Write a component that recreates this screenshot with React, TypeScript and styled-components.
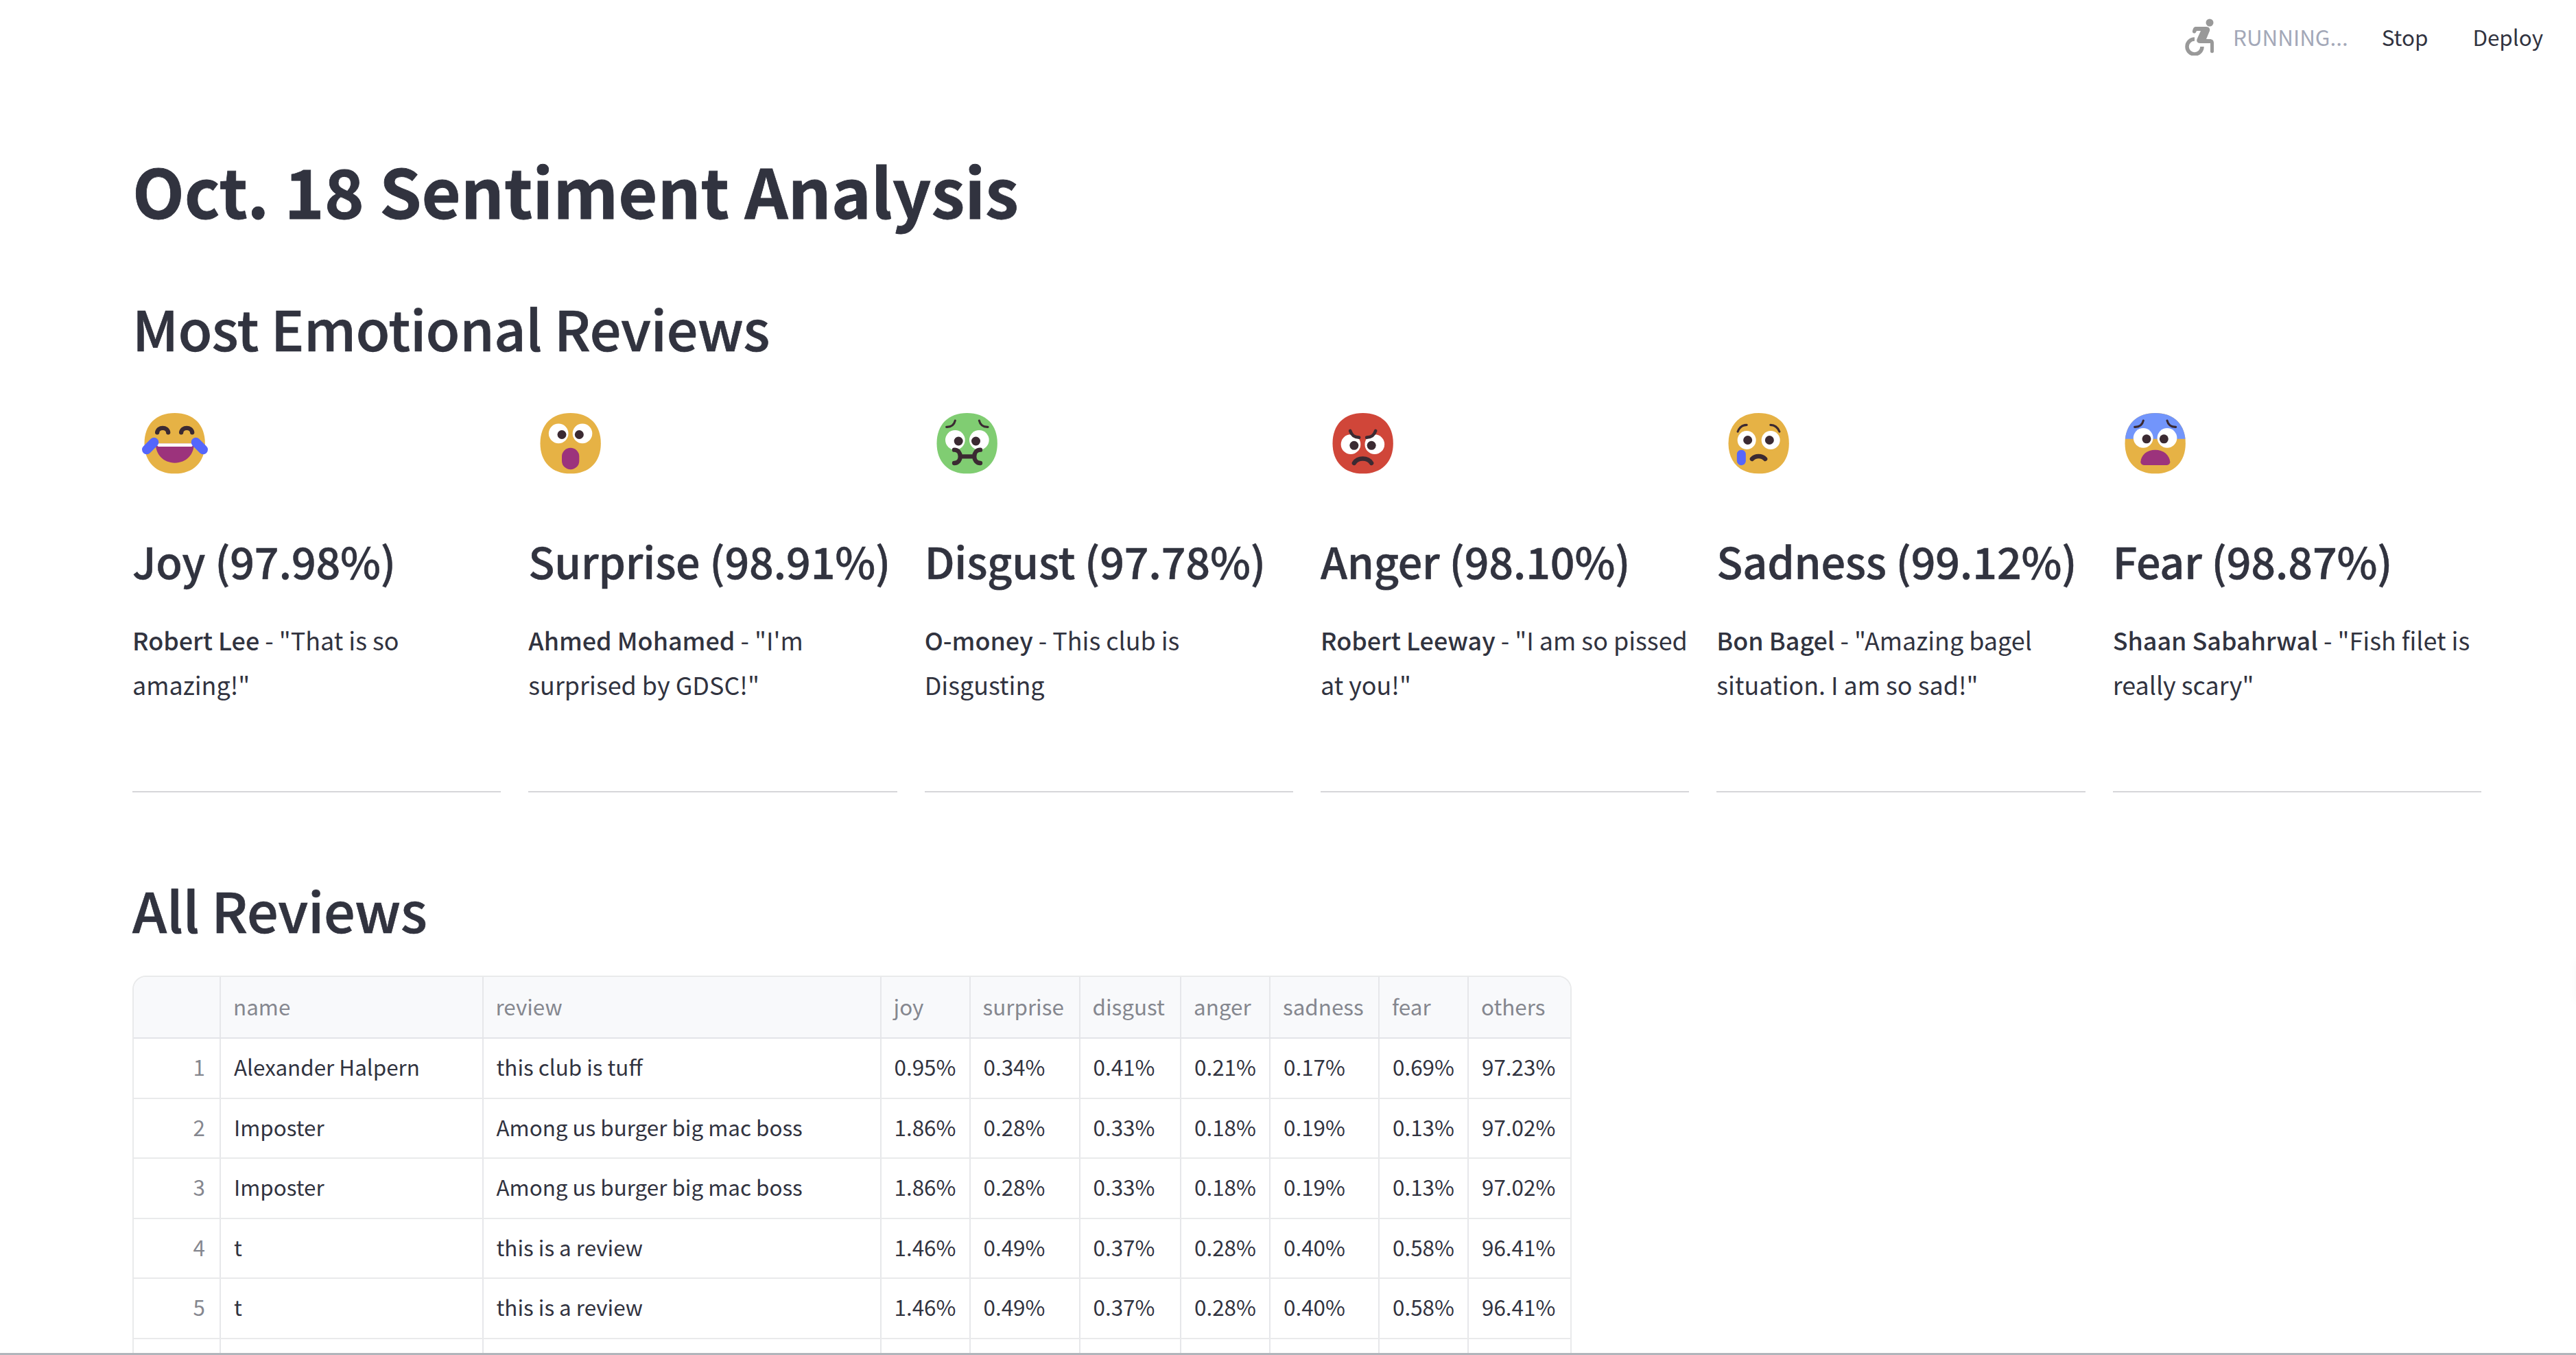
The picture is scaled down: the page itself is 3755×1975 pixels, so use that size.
import React from "react";
import styled, { createGlobalStyle } from "styled-components";

const Global = createGlobalStyle`
  * { box-sizing: border-box; }
  body { margin: 0; background: #fff; color: #31333f; }
  body, table { font-family: "Noto Sans CJK SC", "Noto Sans", sans-serif; }
`;

const Page = styled.div`
  position: relative;
  display: flex;
  flex-direction: column;
  width: 3755px;
  height: 1975px;
  overflow: hidden;
`;

const Toolbar = styled.header`
  display: flex;
  justify-content: flex-end;
  align-items: center;
  height: 108px;
  padding-right: 48px;
  font-size: 31.4px;
  line-height: 56px;
  flex: none;
`;

const Status = styled.div`
  display: flex;
  align-items: center;
  gap: 26px;
  color: #a3a8b8;
  margin-right: 49px;
`;

const ToolButton = styled.button`
  border: 0;
  padding: 0;
  background: none;
  font: inherit;
  color: #31333f;
  & + & { margin-left: 65px; }
`;

const Main = styled.main`
  flex: 1;
  min-height: 0;
  overflow: hidden;
  padding: 102px 138px 0 193px;
`;

const Title = styled.h1`
  margin: 0;
  font-size: 98.6px;
  line-height: 132px;
  font-weight: 700;
  letter-spacing: -0.06px;
  -webkit-text-stroke: 0.8px #31333f;
`;

const Heading = styled.h2<{ $top: number }>`
  margin: ${(p) => p.$top}px 0 0;
  font-size: 80.7px;
  line-height: 108px;
  font-weight: 500;
  letter-spacing: -0.3px;
  -webkit-text-stroke: 0.7px #31333f;
`;

const Columns = styled.section`
  display: grid;
  grid-template-columns: repeat(6, 1fr);
  column-gap: 40px;
  margin-top: 59px;
`;

const Column = styled.article`
  display: flex;
  flex-direction: column;
  min-width: 0;
`;

const Face = styled.svg`
  display: block;
  width: 120px;
  height: 120px;
`;

const Score = styled.h3`
  margin: 65px 0 0;
  font-size: 62.8px;
  line-height: 84px;
  font-weight: 500;
  letter-spacing: -0.22px;
  -webkit-text-stroke: 0.5px #31333f;
  white-space: nowrap;
`;

const Quote = styled.p`
  margin: 41px 0 0;
  font-size: 35.9px;
  line-height: 64.5px;
  strong { font-weight: 500; }
`;

const Rule = styled.hr`
  width: 100%;
  height: 2px;
  border: 0;
  margin: 124px 0 0;
  background: #d6d6d9;
`;

const Frame = styled.div`
  width: 2098px;
  margin-top: 43px;
  border: 2px solid #e9eaeb;
  border-radius: 20px;
  overflow: hidden;
`;

const Row = styled.div<{ $head?: boolean }>`
  display: grid;
  grid-template-columns: 127px 382.5px 580px 130px 160px 147.5px 130px 159px 130px 1fr;
  height: ${(p) => (p.$head ? 90 : 87.5)}px;
  background: ${(p) => (p.$head ? "#f8f9fb" : "#fff")};
  border-bottom: 2px solid ${(p) => (p.$head ? "#e3e4e8" : "#e9eaeb")};
`;

const Cell = styled.div<{ $muted?: boolean; $right?: boolean; $head?: boolean }>`
  display: flex;
  align-items: center;
  justify-content: ${(p) => (p.$right ? "flex-end" : "flex-start")};
  padding: 0 21px ${(p) => (p.$head ? 2 : 3)}px ${(p) => (p.$head ? 18 : 19)}px;
  font-size: 31.4px;
  line-height: 48px;
  white-space: nowrap;
  color: ${(p) => (p.$muted ? "#85878f" : "#31333f")};
  border-right: 2px solid #e6e7ea;
  &:last-child { border-right: 0; }
`;

const BottomEdge = styled.footer`
  flex: none;
  height: 3px;
  background: #b1b5bb;
`;

const EdgeShadow = styled.div`
  position: absolute;
  top: 1400px;
  right: -6px;
  width: 6px;
  height: 60px;
  box-shadow: 0 0 14px rgba(49, 51, 63, 0.05);
`;

const INK = "#3b2a32";
const AMBER = "#e6b245";
const PLUM = "#9c337c";
const BLUE = "#5566fb";

/* Rounded head shared by every emotion, centred on (cx, 228.5). */
const head = (cx: number) => {
  const r = 132.5, k = 82, y = 228.5;
  return `M${cx - r} ${y}C${cx - r} ${y - k} ${cx - k} ${y - r} ${cx} ${y - r}S${cx + r} ${y - k} ${cx + r} ${y}S${cx + k} ${y + r} ${cx} ${y + r}S${cx - r} ${y + k} ${cx - r} ${y}Z`;
};

const Emoji = ({ cx, fill, children }: { cx: number; fill: string; children: React.ReactNode }) => (
  <Face viewBox="0 0 360 360">
    <g transform={`translate(${185 - cx} -60)`} fill="none" strokeLinecap="round">
      <path d={head(cx)} fill={fill} />
      {children}
    </g>
  </Face>
);

const Eyes = ({ l, r, y, pl, pr, py, size = 43 }: Record<"l" | "r" | "y" | "pl" | "pr" | "py", number> & { size?: number }) => (
  <>
    <circle cx={l} cy={y} r={size} fill="#fff" />
    <circle cx={r} cy={y} r={size} fill="#fff" />
    <circle cx={pl} cy={py} r="19.5" fill={INK} />
    <circle cx={pr} cy={py} r="19.5" fill={INK} />
  </>
);

const JoyFace = () => (
  <Emoji cx={224.5} fill={AMBER}>
    <path d="M148 181C150 155 194 155 196 181M253 181C255 155 299 155 301 181" stroke={INK} strokeWidth="19" />
    <path d="M141 229H309C309 278 275 314 225 314S141 278 141 229Z" fill={PLUM} />
    <path d="M146 229H304V233Q304 243 294 243H158Q148 243 146 233Z" fill="#fff" />
    <path d="M134 224L102 256M317 224L349 256" stroke={BLUE} strokeWidth="41" />
  </Emoji>
);

const SurpriseFace = () => (
  <Emoji cx={217} fill={AMBER}>
    <Eyes l={164.5} r={269} y={185.5} pl={179} pr={255} py={190.5} />
    <rect x="179" y="248" width="76" height="95" rx="38" fill={PLUM} />
  </Emoji>
);

const DisgustFace = () => (
  <Emoji cx={239} fill="#80cd72">
    <Eyes l={187} r={292} y={214} pl={201.5} pr={277.5} py={219} />
    <path d="M149 157Q180 158 187 129M330 157Q299 158 292 129" stroke={INK} strokeWidth="9.5" />
    <path d="M183 257C218 257 218 315 183 315M297 257C262 257 262 315 297 315M210 286H270" stroke={INK} strokeWidth="19" />
  </Emoji>
);

const AngerFace = () => (
  <Emoji cx={229.5} fill="#d04639">
    <Eyes l={176.5} r={281} y={233} pl={191} pr={267} py={238} />
    <path d="M174 174C181 195 192 202 213 203M285 174C278 195 267 202 246 203" stroke={INK} strokeWidth="14" />
    <path d="M191 315C207 289 251 289 267 315" stroke={INK} strokeWidth="19" />
  </Emoji>
);

const SadnessFace = () => (
  <Emoji cx={221.5} fill={AMBER}>
    <Eyes l={169} r={274} y={214.5} pl={173.5} pr={268.5} py={214.5} size={40.5} />
    <path d="M130 177Q142 148 169 148M312 177Q300 148 273 148" stroke={INK} strokeWidth="9.5" />
    <path d="M192 297C207 281 235 281 250 297" stroke={INK} strokeWidth="19" />
    <path d="M145.500 276.500V305" stroke={BLUE} strokeWidth="39" />
  </Emoji>
);

const FearFace = () => (
  <Emoji cx={244} fill={AMBER}>
    <clipPath id="brow"><rect x="100" y="90" width="290" height="119.5" /></clipPath>
    <path d={head(244)} fill="#7295fb" clipPath="url(#brow)" />
    <Eyes l={191.5} r={296} y={205} pl={206} pr={282} py={209.5} />
    <path d="M154 157Q185 158 192 129M334 157Q303 158 296 129" stroke={INK} strokeWidth="9.5" />
    <path d="M180 310C182 278 209 257 244 257S306 278 309 310C309 318 303 324 295 324H194C186 324 180 318 180 310Z" fill={PLUM} />
  </Emoji>
);

const WheelchairIcon = () => (
  <svg width="44" height="54" viewBox="0 0 44 54" fill="#999">
    <circle cx="36" cy="6" r="5.500" />
    <path d="M16 12H31C35 12 37 15 36 18L31 30H36C40 30 42 32 42 36V48C42 51 37 51 37 48V36H22C18 36 16 33 18 29L23 18H17L16 20C14 23 10 21 11 18C12 14 13 12 16 12Z" />
    <path d="M14 30A11 11 0 1 0 25 41" fill="none" stroke="#999" strokeWidth="5.500" />
  </svg>
);

const emotions = [
  { label: "Joy", pct: "97.98%", who: "Robert Lee", text: '"That is so amazing!"', Icon: JoyFace },
  { label: "Surprise", pct: "98.91%", who: "Ahmed Mohamed", text: '"I\'m surprised by GDSC!"', Icon: SurpriseFace },
  { label: "Disgust", pct: "97.78%", who: "O-money", text: "This club is Disgusting", Icon: DisgustFace },
  { label: "Anger", pct: "98.10%", who: "Robert Leeway", text: '"I am so pissed at you!"', Icon: AngerFace },
  { label: "Sadness", pct: "99.12%", who: "Bon Bagel", text: '"Amazing bagel situation. I am so sad!"', Icon: SadnessFace },
  { label: "Fear", pct: "98.87%", who: "Shaan Sabahrwal", text: '"Fish filet is really scary"', Icon: FearFace },
];

const headers = ["", "name", "review", "joy", "surprise", "disgust", "anger", "sadness", "fear", "others"];
const burger = ["Imposter", "Among us burger big mac boss", "1.86%", "0.28%", "0.33%", "0.18%", "0.19%", "0.13%", "97.02%"];
const plain = ["t", "this is a review", "1.46%", "0.49%", "0.37%", "0.28%", "0.40%", "0.58%", "96.41%"];
const rows = [
  ["1", "Alexander Halpern", "this club is tuff", "0.95%", "0.34%", "0.41%", "0.21%", "0.17%", "0.69%", "97.23%"],
  ["2", ...burger],
  ["3", ...burger],
  ["4", ...plain],
  ["5", ...plain],
  ["", "", "", "", "", "", "", "", "", ""],
];

export default function App() {
  return (
    <Page>
      <Global />
      <Toolbar>
        <Status>
          <WheelchairIcon />
          <span>RUNNING...</span>
        </Status>
        <ToolButton>Stop</ToolButton>
        <ToolButton>Deploy</ToolButton>
      </Toolbar>
      <Main>
        <Title>Oct. 18 Sentiment Analysis</Title>
        <Heading $top={81}>Most Emotional Reviews</Heading>
        <Columns>
          {emotions.map(({ label, pct, who, text, Icon }) => (
            <Column key={label}>
              <Icon />
              <Score>{label} ({pct})</Score>
              <Quote>
                <strong>{who}</strong> - {text}
              </Quote>
              <Rule />
            </Column>
          ))}
        </Columns>
        <Heading $top={116}>All Reviews</Heading>
        <Frame>
          <Row $head>
            {headers.map((h) => (
              <Cell key={h} $muted $head>{h}</Cell>
            ))}
          </Row>
          {rows.map((r, i) => (
            <Row key={i}>
              {r.map((c, j) => (
                <Cell key={j} $muted={j === 0} $right={j === 0}>{c}</Cell>
              ))}
            </Row>
          ))}
        </Frame>
      </Main>
      <EdgeShadow />
      <BottomEdge />
    </Page>
  );
}
